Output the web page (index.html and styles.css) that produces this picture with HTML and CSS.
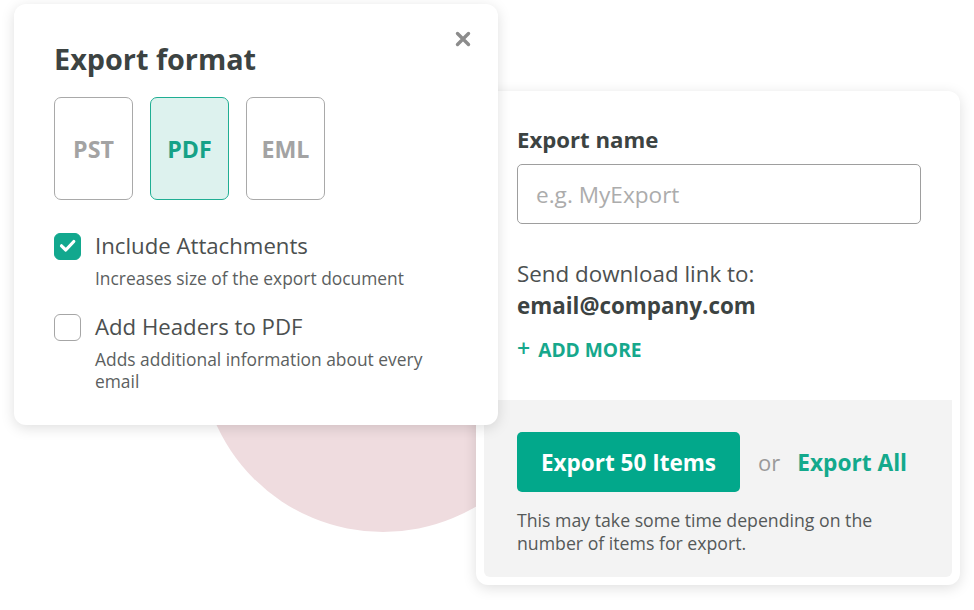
FILE: index.html
```html
<!DOCTYPE html>
<html lang="en">
<head>
<meta charset="utf-8">
<title>Export</title>
<link rel="stylesheet" href="styles.css">
</head>
<body>
<div class="stage">
  <div class="blob"></div>

  <section class="card details">
    <div class="details-body">
      <label class="field-label" for="name">Export name</label>
      <input id="name" class="text-input" type="text" placeholder="e.g. MyExport">
      <p class="send">Send download link to:<br><strong>email@company.com</strong></p>
      <a class="add-more" href="#"><span class="plus">+</span> ADD MORE</a>
    </div>
    <div class="details-footer">
      <div class="actions">
        <button class="primary" type="button">Export 50 Items</button>
        <span class="or">or</span>
        <a class="export-all" href="#">Export All</a>
      </div>
      <p class="note">This may take some time depending on the number of items for export.</p>
    </div>
  </section>

  <section class="card format">
    <button class="close" type="button" aria-label="Close">
      <svg viewBox="0 0 16 16" width="16" height="16"><path d="M2.5 2.5 L13.5 13.5 M13.5 2.5 L2.5 13.5" stroke="#8c8c8c" stroke-width="3.4" stroke-linecap="round" fill="none"/></svg>
    </button>
    <h1 class="title">Export format</h1>
    <div class="formats">
      <div class="fmt">PST</div>
      <div class="fmt active">PDF</div>
      <div class="fmt">EML</div>
    </div>
    <div class="option">
      <span class="box checked">
        <svg viewBox="0 0 27 27" width="27" height="27"><path d="M7.5 13.8 L11.8 18 L19.8 9.5" stroke="#fff" stroke-width="3.2" stroke-linecap="round" stroke-linejoin="round" fill="none"/></svg>
      </span>
      <span class="opt-label">Include Attachments</span>
      <span class="opt-desc">Increases size of the export document</span>
    </div>
    <div class="option second">
      <span class="box"></span>
      <span class="opt-label">Add Headers to PDF</span>
      <span class="opt-desc">Adds additional information about every email</span>
    </div>
  </section>
</div>
</body>
</html>
```

FILE: styles.css
```css
* { box-sizing: border-box; }
html, body { margin: 0; padding: 0; background: #fff; }
body {
  font-family: "Open Sans", "Noto Sans", sans-serif;
  color: #4f5353;
  width: 974px;
  height: 610px;
  overflow: hidden;
}
.stage { position: relative; width: 974px; height: 610px; }

.blob {
  position: absolute;
  left: 200px; top: 166px;
  width: 366px; height: 366px;
  border-radius: 50%;
  background: #efdcdf;
}

.card {
  position: absolute;
  background: #fff;
  border-radius: 12px;
  box-shadow: 0 3px 14px rgba(0, 0, 0, 0.13);
}

/* Format card */
.format {
  left: 14px; top: 4px;
  width: 484px; height: 421px;
  padding: 36px 40px 0 40px;
}
.close {
  position: absolute;
  right: 27px; top: 27px;
  width: 16px; height: 16px;
  padding: 0; border: 0; background: none;
  display: flex;
}
.title {
  margin: 0;
  font-size: 28.8px;
  line-height: 38px;
  font-weight: 700;
  color: #3c4342;
}
.formats {
  display: flex;
  gap: 17px;
  margin-top: 19px;
}
.fmt {
  width: 79px; height: 103px;
  border: 1.5px solid #a9a9a9;
  border-radius: 7px;
  display: flex; align-items: center; justify-content: center;
  font-size: 23.2px; font-weight: 700;
  color: #a3a3a3;
}
.fmt.active {
  background: #ddf2ee;
  border-color: #1fae93;
  color: #16a287;
}

.option {
  display: grid;
  grid-template-columns: 27px 1fr;
  column-gap: 14px;
  margin-top: 32px;
}
.option.second { margin-top: 24px; }
.box {
  width: 27px; height: 27px;
  border: 1.5px solid #a6a6a6;
  border-radius: 6px;
  align-self: center;
  display: flex;
}
.box.checked { background: #12a88e; border-color: #12a88e; }
.box.checked svg { margin: -1.5px; }
.opt-label {
  font-size: 22.2px; line-height: 28px;
  color: #4c5050;
}
.opt-desc {
  grid-column: 2;
  margin-top: 7px;
  max-width: 360px;
  font-size: 17.4px; line-height: 22px;
  color: #5c5f5f;
}

/* Details card */
.details {
  left: 476px; top: 91px;
  width: 484px; height: 494px;
  padding: 0 8px 8px 8px;
  display: flex; flex-direction: column;
}
.details-body {
  padding: 35px 0 0 33px;
  height: 309px;
  display: flex; flex-direction: column; align-items: flex-start;
}
.field-label {
  font-size: 22.2px; line-height: 28px; font-weight: 700;
  color: #3c4342;
}
.text-input {
  margin-top: 10px;
  width: 404px; height: 60px;
  border: 1.5px solid #9e9e9e;
  border-radius: 5px;
  padding: 0 18px;
  font-family: inherit;
  font-size: 22.6px;
  color: #4c5050;
  outline: none;
}
.text-input::placeholder { color: #acacac; }
.send {
  margin: 34px 0 0 0;
  font-size: 22.4px; line-height: 32px;
  color: #4c5050;
}
.send strong { color: #3c4342; font-weight: 700; }
.add-more {
  margin-top: 14px;
  font-size: 19.2px; line-height: 24px; font-weight: 700;
  color: #16a88c;
  text-decoration: none;
}
.plus { font-weight: 600; font-size: 23px; margin-right: 3px; }

.details-footer {
  flex: 1;
  background: #f3f3f3;
  border-radius: 0 0 6px 6px;
  padding: 32px 0 0 33px;
}
.actions { display: flex; align-items: center; }
.primary {
  width: 223px; height: 60px;
  border: 0; border-radius: 5px;
  background: #02a88b;
  color: #fff;
  font-family: inherit;
  font-size: 22.5px; font-weight: 700;
}
.or {
  margin-left: 18px;
  font-size: 22px;
  color: #9a9a9a;
}
.export-all {
  margin-left: 17px;
  font-size: 22.7px; font-weight: 700;
  color: #13a98c;
  text-decoration: none;
}
.note {
  margin: 17px 0 0 0;
  max-width: 400px;
  font-size: 17.7px; line-height: 23px;
  color: #555959;
}
```
